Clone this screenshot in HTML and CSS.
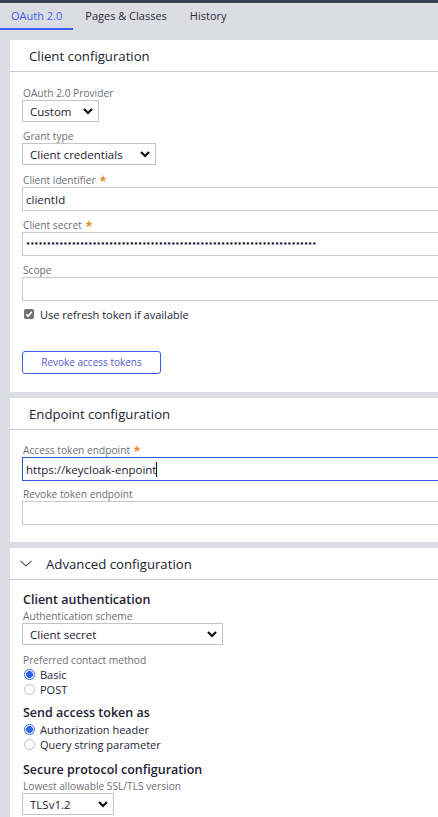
FILE: index.html
```html
<!DOCTYPE html>
<html>
<head>
<meta charset="utf-8">
<link rel="stylesheet" href="styles.css">
</head>
<body>
<div class="topbar"></div>
<nav class="tabs">
  <div class="tab active">OAuth 2.0</div>
  <div class="tab">Pages &amp; Classes</div>
  <div class="tab">History</div>
</nav>
<main class="main">
  <section class="card">
    <div class="card-head">Client configuration</div>
    <div class="card-body">
      <div class="field">
        <div class="label">OAuth 2.0 Provider</div>
        <div class="select w-custom"><span>Custom</span><svg class="arrow" viewBox="0 0 10 7"><polyline points="1,1 5,5 9,1"/></svg></div>
      </div>
      <div class="field">
        <div class="label">Grant type</div>
        <div class="select w-grant"><span>Client credentials</span><svg class="arrow" viewBox="0 0 10 7"><polyline points="1,1 5,5 9,1"/></svg></div>
      </div>
      <div class="field f-after-select">
        <div class="label">Client identifier <svg class="req" viewBox="0 0 10 10"><polygon points="5,0 6.2,3.4 9.8,3.4 6.9,5.6 8,9.2 5,7 2,9.2 3.1,5.6 0.2,3.4 3.8,3.4"/></svg></div>
        <div class="input"><span>clientId</span></div>
      </div>
      <div class="field">
        <div class="label">Client secret <svg class="req" viewBox="0 0 10 10"><polygon points="5,0 6.2,3.4 9.8,3.4 6.9,5.6 8,9.2 5,7 2,9.2 3.1,5.6 0.2,3.4 3.8,3.4"/></svg></div>
        <div class="input"><span class="dots">••••••••••••••••••••••••••••••••••••••••••••••••••••••••••••••••••••••</span></div>
      </div>
      <div class="field">
        <div class="label">Scope</div>
        <div class="input"></div>
      </div>
      <div class="check-row">
        <span class="checkbox"><svg viewBox="0 0 10 10"><polyline points="2.2,5.2 4.2,7.2 7.8,2.8"/></svg></span>
        <span>Use refresh token if available</span>
      </div>
      <div class="btn">Revoke access tokens</div>
    </div>
  </section>

  <section class="card">
    <div class="card-head">Endpoint configuration</div>
    <div class="card-body body2">
      <div class="field">
        <div class="label">Access token endpoint <svg class="req" viewBox="0 0 10 10"><polygon points="5,0 6.2,3.4 9.8,3.4 6.9,5.6 8,9.2 5,7 2,9.2 3.1,5.6 0.2,3.4 3.8,3.4"/></svg></div>
        <div class="input focused"><span class="caret">https://keycloak-enpoint</span></div>
      </div>
      <div class="field f-tight">
        <div class="label">Revoke token endpoint</div>
        <div class="input"></div>
      </div>
    </div>
  </section>

  <section class="card">
    <div class="card-head adv"><svg class="chev" viewBox="0 0 12 7"><polyline points="0.5,0.8 6,6 11.5,0.8"/></svg>Advanced configuration</div>
    <div class="card-body body3">
      <div class="sub-title">Client authentication</div>
      <div class="label">Authentication scheme</div>
      <div class="select w-scheme"><span>Client secret</span><svg class="arrow" viewBox="0 0 10 7"><polyline points="1,1 5,5 9,1"/></svg></div>
      <div class="label mt-pref">Preferred contact method</div>
      <div class="radio-row"><span class="radio on"></span><span>Basic</span></div>
      <div class="radio-row"><span class="radio"></span><span>POST</span></div>
      <div class="sub-title mt-send">Send access token as</div>
      <div class="radio-row"><span class="radio on"></span><span>Authorization header</span></div>
      <div class="radio-row"><span class="radio"></span><span>Query string parameter</span></div>
      <div class="sub-title mt-secure">Secure protocol configuration</div>
      <div class="label">Lowest allowable SSL/TLS version</div>
      <div class="select w-tls"><span>TLSv1.2</span><svg class="arrow" viewBox="0 0 10 7"><polyline points="1,1 5,5 9,1"/></svg></div>
    </div>
  </section>
</main>
</body>
</html>
```
FILE: styles.css
```css
html, body {
  margin: 0;
  padding: 0;
  overflow: hidden;
  background: #dcdde2;
}
body {
  font-family: "Open Sans", "Noto Sans", sans-serif;
  color: #1f2033;
  width: 438px;
  height: 817px;
}
.topbar {
  height: 3px;
  background: #3c3f51;
}
.tabs {
  display: flex;
  height: 27px;
  align-items: stretch;
}
.tab {
  font-size: 11px;
  line-height: 25px;
  padding: 0 11px 0 12px;
  color: #2a2b3d;
  border-bottom: 2px solid transparent;
}
.tab.active {
  color: #3e5cf2;
  border-bottom-color: #3e5cf2;
  padding-left: 11px;
}
.main {
  margin-top: 10px;
  padding-left: 10px;
  width: 560px;
  display: flex;
  flex-direction: column;
  gap: 6px;
}
.card {
  background: #fff;
}
.card-head {
  height: 31px;
  border-bottom: 1px solid #c9cad1;
  padding-left: 19px;
  font-size: 13.2px;
  line-height: 32px;
  color: #1c1d30;
}
.card-head.adv {
  display: flex;
  align-items: center;
  padding-left: 10px;
}
.chev {
  width: 12px;
  height: 7px;
  margin-right: 14px;
  fill: none;
  stroke: #55566a;
  stroke-width: 1.1;
}
.card-body {
  padding: 14px 0 18px 12px;
  display: flex;
  flex-direction: column;
}
.body2 { padding-top: 13px; padding-bottom: 17px; }
.body3 { padding-top: 11px; }
.field + .field { margin-top: 7px; }
.field.f-after-select { margin-top: 8px; }
.field.f-tight { margin-top: 6px; }
.label {
  font-size: 10.2px;
  line-height: 14px;
  color: #6e6e78;
  padding-left: 1px;
  display: flex;
  align-items: center;
  gap: 3px;
}
.req {
  width: 8px;
  height: 8px;
  fill: #e39332;
  margin-top: -2px;
}
.select {
  height: 22px;
  box-sizing: border-box;
  border: 1px solid #c3c3c8;
  display: flex;
  align-items: center;
  justify-content: space-between;
  padding: 0 5px 0 7px;
  font-size: 11.5px;
  color: #1f2033;
  background: #fff;
}
.w-custom { width: 77px; }
.w-grant { width: 134px; }
.w-scheme { width: 201px; }
.w-tls { width: 92px; }
.arrow {
  width: 10px;
  height: 7px;
  fill: none;
  stroke: #111;
  stroke-width: 2.2;
}
.input {
  height: 24px;
  box-sizing: border-box;
  border: 1px solid #c9c9ce;
  display: flex;
  align-items: center;
  padding-left: 3px;
  font-size: 11.5px;
  color: #1f2033;
}
.input.focused {
  border-color: #3356e8;
}
.caret {
  border-right: 1px solid #111;
  line-height: 15px;
}
.dots {
  font-family: "DejaVu Sans Mono", monospace;
  font-size: 6.9px;
  color: #1c1d40;
  font-weight: bold;
}
.check-row {
  margin-top: 6px;
  display: flex;
  align-items: center;
  height: 14px;
  font-size: 11px;
  color: #252638;
}
.checkbox {
  width: 10px;
  height: 10px;
  border-radius: 2px;
  background: #6f6f74;
  margin: 0 6px 0 2px;
  display: flex;
}
.checkbox svg {
  width: 10px;
  height: 10px;
  fill: none;
  stroke: #fff;
  stroke-width: 1.6;
}
.btn {
  margin-top: 30px;
  width: 139px;
  height: 23px;
  box-sizing: border-box;
  border: 1px solid #3e5cf2;
  border-radius: 3px;
  font-size: 10px;
  line-height: 21px;
  text-align: center;
  color: #5458cf;
}
.sub-title {
  font-size: 12.5px;
  line-height: 18px;
  font-weight: 600;
  color: #1f2033;
  padding-left: 1px;
}
.mt-pref { margin-top: 8px; }
.mt-send { margin-top: 7px; }
.mt-secure { margin-top: 9px; }
.radio-row {
  display: flex;
  align-items: center;
  height: 15px;
  font-size: 11px;
  color: #252638;
}
.radio {
  width: 11px;
  height: 11px;
  box-sizing: border-box;
  border: 1px solid #bdbdc4;
  border-radius: 50%;
  margin: 0 5px 0 2px;
  background: #fff;
}
.radio.on {
  border: 1.5px solid #2d63e8;
  background: radial-gradient(circle, #2d63e8 0 3.2px, #fff 3.7px);
}
```
